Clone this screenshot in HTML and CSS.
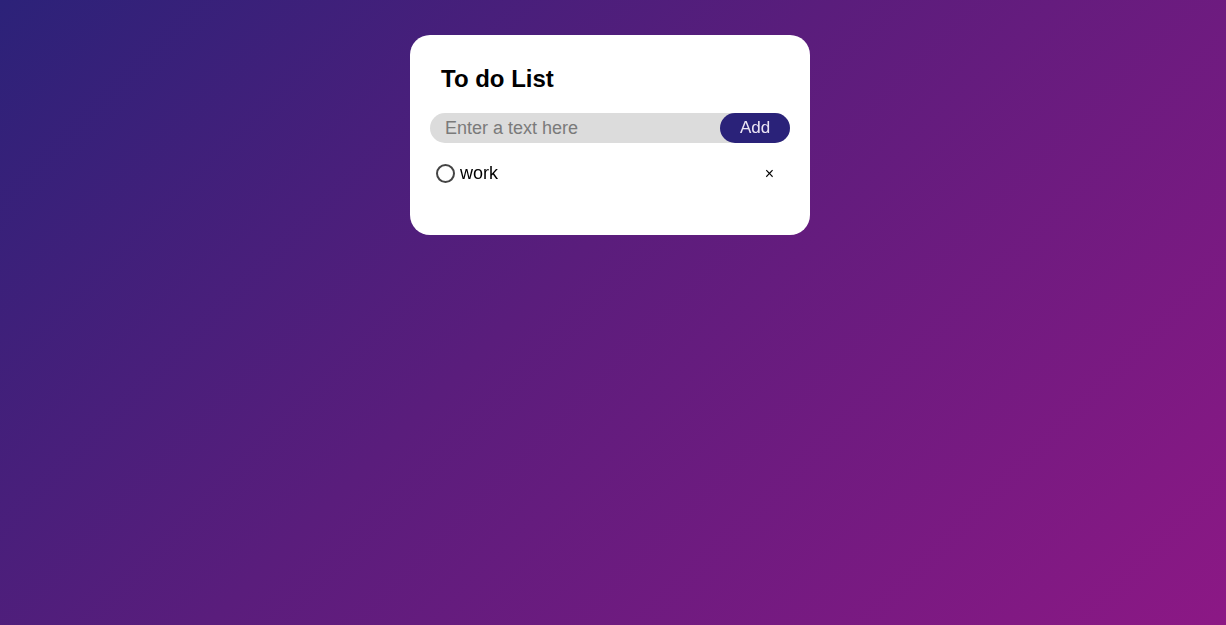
FILE: index.html
```html
<!DOCTYPE html>
<html>
<head>
<meta charset="utf-8">
<link rel="stylesheet" href="styles.css">
</head>
<body>
<div class="page">
  <div class="card">
    <h2 class="title">To do List</h2>
    <div class="row">
      <input class="field" type="text" placeholder="Enter a text here" autofocus>
      <button class="add">Add</button>
    </div>
    <ul class="list">
      <li class="item"><span class="check"></span><span class="label">work</span><span class="remove">×</span></li>
    </ul>
  </div>
</div>
</body>
</html>
```
FILE: styles.css
```css
* { box-sizing: border-box; }
html, body { margin: 0; height: 100%; }
body {
  font-family: "Liberation Sans", Arial, sans-serif;
  background: linear-gradient(135deg, #2c2279 0%, #5a1d7c 45%, #8c1885 100%);
}
.page {
  display: flex;
  justify-content: center;
  padding: 35px 6px 0 0;
}
.card {
  width: 400px;
  background: #fff;
  border-radius: 20px;
  padding: 20px 20px 47px;
}
.title {
  margin: 10px 0 20px 11px;
  font-size: 24px;
  line-height: 28px;
  font-weight: bold;
  color: #000;
}
.row {
  display: flex;
  align-items: center;
  height: 30px;
  background: #dcdcdc;
  border-radius: 30px;
}
.field {
  flex: 1;
  min-width: 0;
  height: 30px;
  border: none;
  outline: none;
  background: transparent;
  padding: 0 0 0 15px;
  font-family: "Liberation Sans", Arial, sans-serif;
  font-size: 18px;
  color: #000;
  caret-color: #000;
}
.field::placeholder { color: #7a7a7a; }
.add {
  width: 70px;
  height: 30px;
  border: none;
  border-radius: 30px;
  background: #2a2279;
  color: #ece6f4;
  font-family: "Liberation Sans", Arial, sans-serif;
  font-size: 17px;
  padding: 0;
}
.list {
  list-style: none;
  margin: 15px 0 0;
  padding: 0;
}
.item {
  display: flex;
  align-items: center;
  height: 30px;
  padding: 0 16px 0 6px;
  font-size: 18px;
  color: #000;
}
.check {
  width: 19px;
  height: 19px;
  border: 2px solid #444;
  border-radius: 50%;
  margin-right: 5px;
}
.label { flex: 1; }
.remove {
  font-size: 16px;
  line-height: 1;
  padding-top: 2px;
}
```
